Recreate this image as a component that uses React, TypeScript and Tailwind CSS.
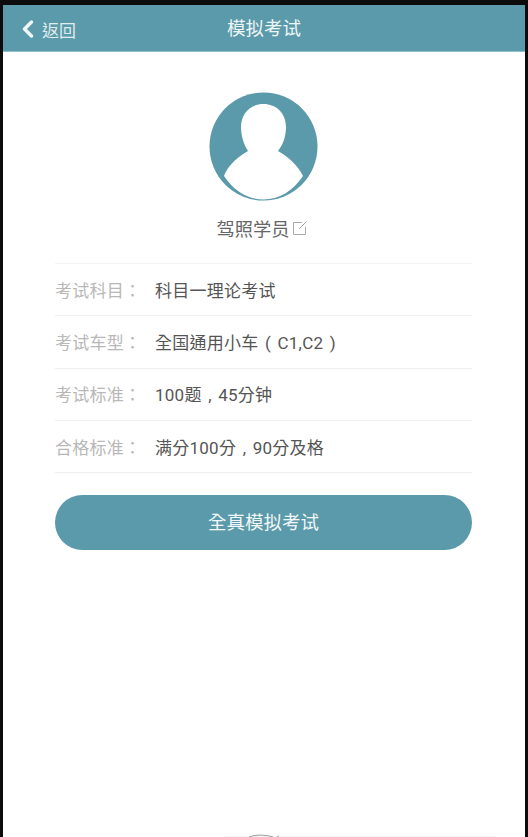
import { ChevronLeft } from "lucide-react";

const rows = [
  { label: "考试科目：", value: "科目一理论考试" },
  { label: "考试车型：", value: "全国通用小车 ( C1,C2 )" },
  { label: "考试标准：", value: "100题 , 45分钟" },
  { label: "合格标准：", value: "满分100分 , 90分及格" },
];

const font = { fontFamily: '"Roboto", "Noto Sans CJK TC", sans-serif' };

export default function App() {
  return (
    <div className="h-[837px] w-[528px] overflow-hidden bg-[#0c0c0c] pt-[5px] pl-[3px] pr-[3px]" style={font}>
      <div className="flex h-[832px] flex-col bg-white">
        <div className="relative flex h-[47px] items-center justify-center border-b border-[#8fc0cb] bg-[#5b9aaa]">
          <div className="absolute left-[12px] top-[9px] flex items-center text-[#eef6f7]">
            <ChevronLeft size={28} strokeWidth={3} className="-ml-[1px]" />
            <span className="mt-[5px] text-[17px] opacity-90">返回</span>
          </div>
          <span className="mt-[3px] text-[18.5px] text-[#eef6f7]">模拟考试</span>
        </div>

        <div className="flex flex-col items-center pt-[40px] pr-[2px]">
          <div className="h-[109px] w-[109px]">
            <svg viewBox="0 0 109 109" className="h-full w-full">
              <circle cx="54.5" cy="54.5" r="54" fill="#5b9aaa" />
              <path
                d="M15 84 C18 76 24 68 39 59 C35 53 32 44 32 35 C32 21 42 12 54.5 12 C67 12 77 21 77 35 C77 44 74 53 69 59 C84 68 90 76 94 84 C84 99 70 107.5 54.5 107.5 C39 107.5 25 99 15 84 Z"
                fill="#fff"
              />
            </svg>
          </div>
          <div className="mt-[16px] flex items-center pr-[2px]">
            <span className="text-[18.25px] leading-[26px] text-[#666]">驾照学员</span>
            <svg viewBox="0 0 16 16" className="-mt-[5px] ml-[2px] h-[16px] w-[16px]" fill="none" stroke="#aaa" strokeWidth="1">
              <path d="M10 2.5H1.5V14.5H13.5V7" />
              <path d="M7 9L14.5 1.5" />
            </svg>
          </div>
        </div>

        <div className="ml-[52px] mr-[53px] mt-[20px] border-t border-[#f4f4f4]">
          {rows.map((r) => (
            <div key={r.label} className="flex h-[52.25px] items-center border-b border-[#f0f0f0] pt-[4px] text-[17px] tracking-[0.25px] [word-spacing:2px]">
              <span className="w-[100px] text-[#b8b8b8]">{r.label}</span>
              <span className="text-[#555]">{r.value}</span>
            </div>
          ))}
        </div>

        <button className="ml-[52px] mr-[53px] mt-[22px] h-[55px] rounded-[28px] bg-[#5b9aaa] pt-[3px] text-[18.5px] text-[#f2f8f9]">
          全真模拟考试
        </button>

        <svg viewBox="0 0 522 3" className="mt-auto h-[3px] w-full shrink-0">
          <path d="M222 2.5H492" stroke="#f3f3f3" strokeWidth="1" />
          <path d="M246 3C252 0.5 262 0.5 270 3" stroke="#999" strokeWidth="1" fill="none" />
          <circle cx="275" cy="2.5" r="1" fill="#bbb" />
        </svg>
      </div>
    </div>
  );
}
